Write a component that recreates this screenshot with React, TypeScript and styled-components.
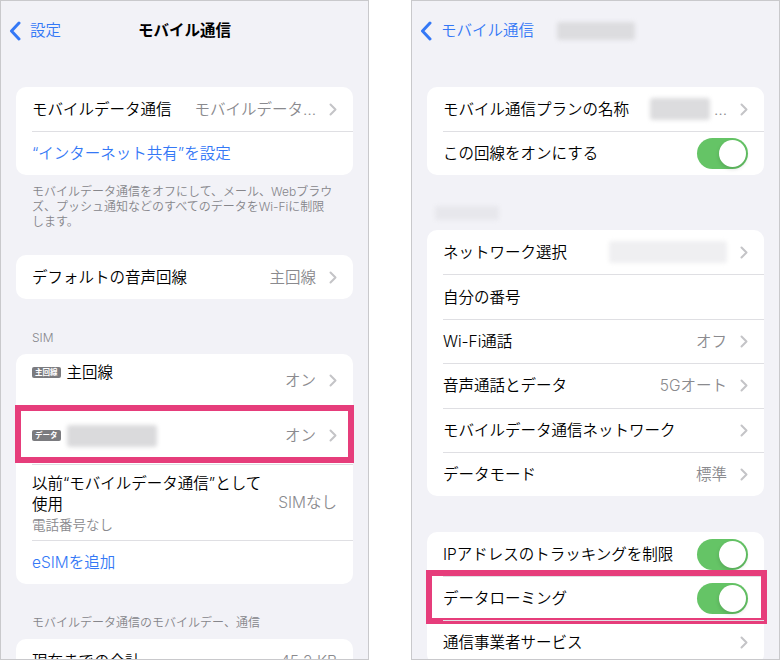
import React from 'react';
import styled, { createGlobalStyle } from 'styled-components';

const Global = createGlobalStyle`
  html, body { margin: 0; padding: 0; background: #ffffff; }
  body {
    font-family: "Inter", "Noto Sans CJK JP", "Noto Sans", sans-serif;
    -webkit-font-smoothing: antialiased;
  }
  * { box-sizing: border-box; }
`;

const Page = styled.div`
  display: flex;
  gap: 42px;
  width: 780px;
  height: 660px;
  overflow: hidden;
`;

const Panel = styled.div`
  flex: none;
  width: 369px;
  height: 660px;
  border: 1px solid #c9c9cc;
  background: #f2f2f7;
  overflow: hidden;
`;

const Nav = styled.div`
  height: 60px;
  display: grid;
  grid-template-columns: 1fr auto 1fr;
  align-items: center;
`;

const Back = styled.div`
  display: flex;
  align-items: center;
  gap: 9px;
  padding-left: 8px;
  color: #3478f6;
  font-size: 15.5px;
  line-height: 20px;
  font-weight: 350;
  white-space: nowrap;
`;

const Title = styled.div`
  font-size: 15.5px;
  font-weight: 700;
  color: #000;
  line-height: 20px;
`;

const Card = styled.div<{ $mt: number }>`
  margin: ${(p) => p.$mt}px 15px 0;
  background: #ffffff;
  border-radius: 10px;
`;

const Row = styled.div`
  position: relative;
  display: flex;
  padding-left: 16px;
`;

const RowBody = styled.div<{ $h: number; $sep?: boolean; $align?: string }>`
  flex: 1;
  min-height: ${(p) => p.$h}px;
  display: flex;
  align-items: ${(p) => p.$align || 'center'};
  padding-right: 16px;
  border-top: ${(p) => (p.$sep ? '1px solid #dfdfe3' : 'none')};
`;

const Label = styled.div<{ $blue?: boolean; $pt?: number }>`
  flex: 1;
  display: flex;
  align-items: center;
  gap: 6px;
  font-size: 15.5px;
  line-height: 21px;
  font-weight: 350;
  color: ${(p) => (p.$blue ? '#3478f6' : '#000')};
  white-space: nowrap;
  padding-top: ${(p) => p.$pt || 0}px;
`;

const Stack = styled.div<{ $pt?: number }>`
  flex: 1;
  display: flex;
  flex-direction: column;
  padding-top: ${(p) => p.$pt || 0}px;
`;

const Sub = styled.div`
  font-size: 13.5px;
  line-height: 20px;
  font-weight: 350;
  color: #8a8a8e;
`;

const Value = styled.div`
  display: flex;
  align-items: center;
  gap: 4px;
  font-size: 15.5px;
  line-height: 21px;
  font-weight: 350;
  color: #8a8a8e;
  white-space: nowrap;
  align-self: center;
`;

const ChevronWrap = styled.div`
  display: flex;
  align-items: center;
  margin-left: 13px;
  align-self: center;
`;

const Badge = styled.span`
  display: inline-flex;
  align-items: center;
  height: 11px;
  padding: 0 3px;
  border-radius: 2px;
  background: #7b7b7f;
  color: #fff;
  font-size: 7.5px;
  line-height: 11px;
  font-weight: 700;
`;

const Blur = styled.div<{ $w: number; $h: number; $c?: string; $ml?: number }>`
  flex: none;
  width: ${(p) => p.$w}px;
  height: ${(p) => p.$h}px;
  margin-left: ${(p) => p.$ml || 0}px;
  background: ${(p) => p.$c || '#d6d6d9'};
  filter: blur(2px);
  border-radius: 3px;
`;

const Footer = styled.div<{ $mt: number }>`
  margin-top: ${(p) => p.$mt}px;
  padding: 0 31px;
  font-size: 12px;
  line-height: 15px;
  font-weight: 350;
  color: #86868b;
  white-space: nowrap;
`;

const Line = styled.div``;

const Toggle = styled.div`
  flex: none;
  width: 51px;
  height: 31px;
  border-radius: 16px;
  background: #65c466;
  padding: 2px;
  display: flex;
  justify-content: flex-end;
  align-self: center;
`;

const Knob = styled.div`
  width: 27px;
  height: 27px;
  border-radius: 50%;
  background: #ffffff;
  box-shadow: 0 2px 4px rgba(0, 0, 0, 0.15);
`;

const Highlight = styled.div<{ $t: number; $r: number; $b: number; $l: number }>`
  position: absolute;
  top: ${(p) => p.$t}px;
  right: ${(p) => p.$r}px;
  bottom: ${(p) => p.$b}px;
  left: ${(p) => p.$l}px;
  border: 6px solid #e63d7b;
  pointer-events: none;
`;

const Chevron = () => (
  <ChevronWrap>
    <svg width="8" height="13" viewBox="0 0 8 13">
      <path d="M1.5 1.5 L6.5 6.5 L1.5 11.5" fill="none" stroke="#c4c4c7" strokeWidth="2" strokeLinecap="round" strokeLinejoin="round" />
    </svg>
  </ChevronWrap>
);

const BackChevron = () => (
  <svg width="12" height="20" viewBox="0 0 12 20">
    <path d="M10 2 L2.5 10 L10 18" fill="none" stroke="#3478f6" strokeWidth="3" strokeLinecap="round" strokeLinejoin="round" />
  </svg>
);

const Left = () => (
  <Panel>
    <Nav>
      <Back>
        <BackChevron />
        設定
      </Back>
      <Title>モバイル通信</Title>
      <div />
    </Nav>

    <Card $mt={26}>
      <Row>
        <RowBody $h={44}>
          <Label>モバイルデータ通信</Label>
          <Value>モバイルデータ…</Value>
          <Chevron />
        </RowBody>
      </Row>
      <Row>
        <RowBody $h={44} $sep>
          <Label $blue>“インターネット共有”を設定</Label>
        </RowBody>
      </Row>
    </Card>
    <Footer $mt={9}>
      <Line>モバイルデータ通信をオフにして、メール、Webブラウ</Line>
      <Line>ズ、プッシュ通知などのすべてのデータをWi-Fiに制限</Line>
      <Line>します。</Line>
    </Footer>

    <Card $mt={26}>
      <Row>
        <RowBody $h={44}>
          <Label>デフォルトの音声回線</Label>
          <Value>主回線</Value>
          <Chevron />
        </RowBody>
      </Row>
    </Card>

    <Footer $mt={31}>SIM</Footer>

    <Card $mt={9}>
      <Row>
        <RowBody $h={52} $align="flex-start">
          <Label $pt={8}>
            <Badge>主回線</Badge>
            主回線
          </Label>
          <Value>オン</Value>
          <Chevron />
        </RowBody>
      </Row>
      <Row>
        <RowBody $h={58} $sep>
          <Label>
            <Badge>データ</Badge>
            <Blur $w={90} $h={22} $c="#dadadc" />
          </Label>
          <Value>オン</Value>
          <Chevron />
        </RowBody>
        <Highlight $t={-1} $r={-1} $b={1} $l={-1} />
      </Row>
      <Row>
        <RowBody $h={76} $sep $align="flex-start">
          <Stack $pt={8}>
            <Label>以前“モバイルデータ通信”として</Label>
            <Label>使用</Label>
            <Sub>電話番号なし</Sub>
          </Stack>
          <Value>SIMなし</Value>
        </RowBody>
      </Row>
      <Row>
        <RowBody $h={44} $sep>
          <Label $blue>eSIMを追加</Label>
        </RowBody>
      </Row>
    </Card>

    <Footer $mt={31}>モバイルデータ通信のモバイルデー、通信</Footer>

    <Card $mt={9}>
      <Row>
        <RowBody $h={44}>
          <Label>現在までの合計</Label>
          <Value>45.2 KB</Value>
        </RowBody>
      </Row>
    </Card>
  </Panel>
);

const Right = () => (
  <Panel>
    <Nav>
      <Back>
        <BackChevron />
        モバイル通信
      </Back>
      <Blur $w={78} $h={18} $c="#dcdcdf" />
      <div />
    </Nav>

    <Card $mt={26}>
      <Row>
        <RowBody $h={44}>
          <Label>モバイル通信プランの名称</Label>
          <Value>
            <Blur $w={60} $h={22} $c="#dcdcde" />…
          </Value>
          <Chevron />
        </RowBody>
      </Row>
      <Row>
        <RowBody $h={44} $sep>
          <Label>この回線をオンにする</Label>
          <Toggle>
            <Knob />
          </Toggle>
        </RowBody>
      </Row>
    </Card>

    <Footer $mt={31}>
      <Blur $w={64} $h={14} $c="#e7e7ec" $ml={-8} />
    </Footer>

    <Card $mt={10}>
      <Row>
        <RowBody $h={44.4}>
          <Label>ネットワーク選択</Label>
          <Blur $w={118} $h={22} $c="#efeff1" />
          <Chevron />
        </RowBody>
      </Row>
      <Row>
        <RowBody $h={44.4} $sep>
          <Label>自分の番号</Label>
        </RowBody>
      </Row>
      <Row>
        <RowBody $h={44.4} $sep>
          <Label>Wi-Fi通話</Label>
          <Value>オフ</Value>
          <Chevron />
        </RowBody>
      </Row>
      <Row>
        <RowBody $h={44.4} $sep>
          <Label>音声通話とデータ</Label>
          <Value>5Gオート</Value>
          <Chevron />
        </RowBody>
      </Row>
      <Row>
        <RowBody $h={44.4} $sep>
          <Label>モバイルデータ通信ネットワーク</Label>
          <Chevron />
        </RowBody>
      </Row>
      <Row>
        <RowBody $h={44.4} $sep>
          <Label>データモード</Label>
          <Value>標準</Value>
          <Chevron />
        </RowBody>
      </Row>
    </Card>

    <Card $mt={36}>
      <Row>
        <RowBody $h={44}>
          <Label>IPアドレスのトラッキングを制限</Label>
          <Toggle>
            <Knob />
          </Toggle>
        </RowBody>
      </Row>
      <Row>
        <RowBody $h={44} $sep>
          <Label>データローミング</Label>
          <Toggle>
            <Knob />
          </Toggle>
        </RowBody>
        <Highlight $t={-6} $r={-3} $b={-4} $l={-1} />
      </Row>
      <Row>
        <RowBody $h={44} $sep>
          <Label>通信事業者サービス</Label>
          <Chevron />
        </RowBody>
      </Row>
    </Card>
  </Panel>
);

export default function App() {
  return (
    <>
      <Global />
      <Page>
        <Left />
        <Right />
      </Page>
    </>
  );
}
